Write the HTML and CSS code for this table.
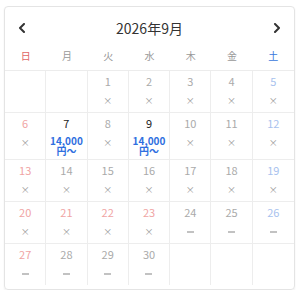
FILE: index.html
```html
<!DOCTYPE html>
<html lang="ja">
<head>
<meta charset="utf-8">
<link rel="stylesheet" href="styles.css">
</head>
<body>
<div class="card">
  <div class="header">
    <span class="nav"><svg width="8" height="10" viewBox="0 0 8 10"><polyline points="6,1 2,5 6,9" fill="none" stroke="#333" stroke-width="2" stroke-linecap="round" stroke-linejoin="round"/></svg></span>
    <span class="title">2026年9月</span>
    <span class="nav"><svg width="8" height="10" viewBox="0 0 8 10"><polyline points="2,1 6,5 2,9" fill="none" stroke="#333" stroke-width="2" stroke-linecap="round" stroke-linejoin="round"/></svg></span>
  </div>
  <div class="weekdays">
    <span class="sun">日</span><span>月</span><span>火</span><span>水</span><span>木</span><span>金</span><span class="sat">土</span>
  </div>
  <div class="days">
    <div class="cell"></div>
    <div class="cell"></div>
    <div class="cell"><span class="d off">1</span><span class="x">×</span></div>
    <div class="cell"><span class="d off">2</span><span class="x">×</span></div>
    <div class="cell"><span class="d off">3</span><span class="x">×</span></div>
    <div class="cell"><span class="d off">4</span><span class="x">×</span></div>
    <div class="cell"><span class="d sat">5</span><span class="x">×</span></div>

    <div class="cell"><span class="d sun">6</span><span class="x">×</span></div>
    <div class="cell"><span class="d on">7</span><span class="price">14,000<br>円〜</span></div>
    <div class="cell"><span class="d off">8</span><span class="x">×</span></div>
    <div class="cell"><span class="d on">9</span><span class="price">14,000<br>円〜</span></div>
    <div class="cell"><span class="d off">10</span><span class="x">×</span></div>
    <div class="cell"><span class="d off">11</span><span class="x">×</span></div>
    <div class="cell"><span class="d sat">12</span><span class="x">×</span></div>

    <div class="cell"><span class="d sun">13</span><span class="x">×</span></div>
    <div class="cell"><span class="d off">14</span><span class="x">×</span></div>
    <div class="cell"><span class="d off">15</span><span class="x">×</span></div>
    <div class="cell"><span class="d off">16</span><span class="x">×</span></div>
    <div class="cell"><span class="d off">17</span><span class="x">×</span></div>
    <div class="cell"><span class="d off">18</span><span class="x">×</span></div>
    <div class="cell"><span class="d sat">19</span><span class="x">×</span></div>

    <div class="cell"><span class="d sun">20</span><span class="x">×</span></div>
    <div class="cell"><span class="d sun">21</span><span class="x">×</span></div>
    <div class="cell"><span class="d sun">22</span><span class="x">×</span></div>
    <div class="cell"><span class="d sun">23</span><span class="x">×</span></div>
    <div class="cell"><span class="d off">24</span><span class="dash"></span></div>
    <div class="cell"><span class="d off">25</span><span class="dash"></span></div>
    <div class="cell"><span class="d sat">26</span><span class="dash"></span></div>

    <div class="cell last"><span class="d sun">27</span><span class="dash"></span></div>
    <div class="cell last"><span class="d off">28</span><span class="dash"></span></div>
    <div class="cell last"><span class="d off">29</span><span class="dash"></span></div>
    <div class="cell last"><span class="d off">30</span><span class="dash"></span></div>
    <div class="cell last"></div>
    <div class="cell last"></div>
    <div class="cell last"></div>
  </div>
</div>
</body>
</html>
```
FILE: styles.css
```css
html, body {
  margin: 0;
  padding: 0;
  background: #fff;
}
body {
  font-family: "Noto Sans CJK JP", "Noto Sans", sans-serif;
  color: #333;
}
.card {
  margin: 6px 5px 0 4px;
  border: 1px solid #e4e4e4;
  border-radius: 4px;
  box-shadow: 0 1px 2px rgba(0, 0, 0, 0.07);
  padding-bottom: 4px;
}
.header {
  height: 30px;
  margin-top: 6px;
  padding: 0 13px;
  display: flex;
  align-items: center;
  justify-content: space-between;
}
.nav {
  display: flex;
  width: 8px;
  height: 10px;
}
.title {
  font-size: 14px;
  line-height: 30px;
  color: #333;
}
.weekdays {
  display: grid;
  grid-template-columns: repeat(7, 1fr);
  padding: 6px 0 7px;
  border-bottom: 1px solid #ececec;
  font-size: 10px;
  line-height: 14px;
  color: #999;
  text-align: center;
}
.weekdays .sun { color: #e06666; }
.weekdays .sat { color: #3a78dc; }
.days {
  display: grid;
  grid-template-columns: repeat(7, 1fr);
}
.cell {
  display: flex;
  flex-direction: column;
  align-items: center;
  padding: 4px 0 4px;
  min-height: 33px;
  border-right: 1px solid #ededed;
  border-bottom: 1px solid #ededed;
}
.cell:nth-child(7n) { border-right: none; }
.cell.last { border-bottom: none; }
.d {
  font-size: 11px;
  line-height: 13px;
  color: #aaa;
}
.d.on { color: #222; }
.d.sun { color: #f0a4a4; }
.d.sat { color: #a8c2ee; }
.x {
  margin-top: 6px;
  font-size: 9px;
  line-height: 14px;
  color: #999;
}
.dash {
  margin-top: 12px;
  width: 7px;
  height: 2px;
  background: #c2c2c2;
}
.price {
  margin: 6px 0 -1px;
  font-size: 10px;
  line-height: 10px;
  font-weight: bold;
  color: #2f6fe0;
  text-align: center;
}
```
